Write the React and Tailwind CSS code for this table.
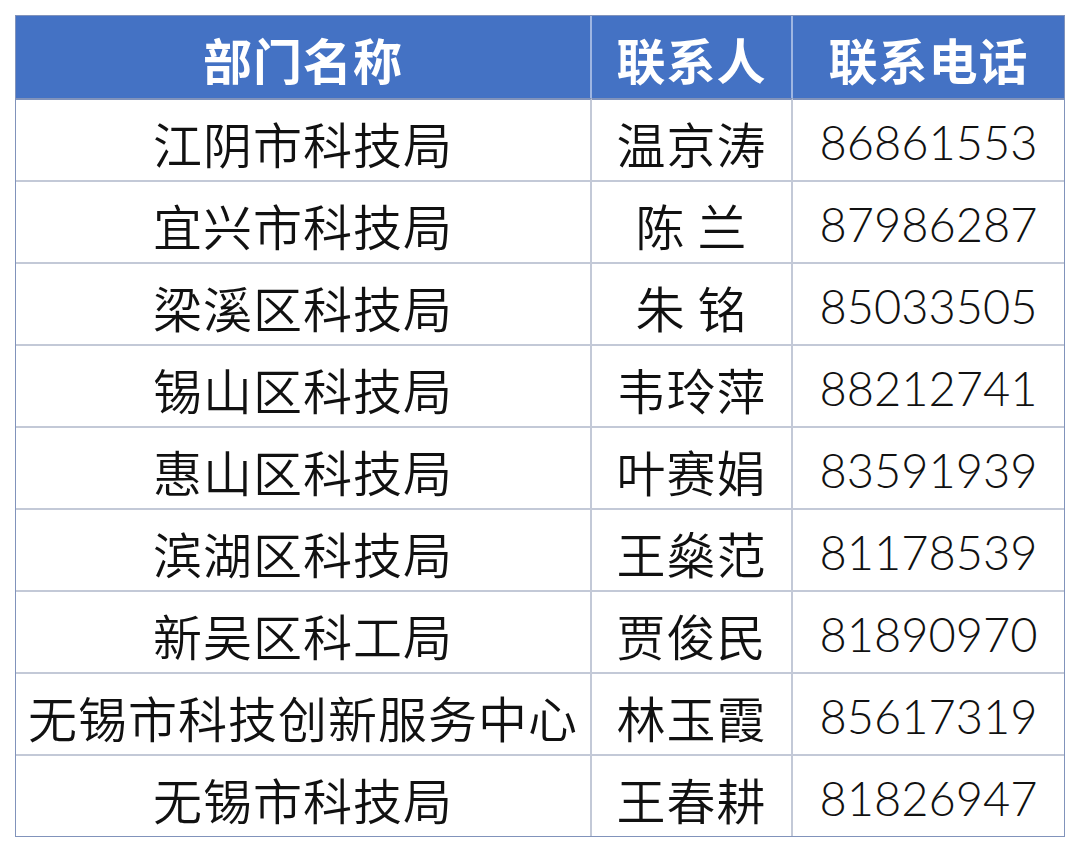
import React from "react";

const rows = [
  ["江阴市科技局", "温京涛", "86861553"],
  ["宜兴市科技局", "陈 兰", "87986287"],
  ["梁溪区科技局", "朱 铭", "85033505"],
  ["锡山区科技局", "韦玲萍", "88212741"],
  ["惠山区科技局", "叶赛娟", "83591939"],
  ["滨湖区科技局", "王燊范", "81178539"],
  ["新吴区科工局", "贾俊民", "81890970"],
  ["无锡市科技创新服务中心", "林玉霞", "85617319"],
  ["无锡市科技局", "王春耕", "81826947"],
];

const cjk = { fontFamily: '"Noto Sans CJK SC", "Noto Sans", sans-serif' };
const num = { fontFamily: 'Lato, "Liberation Sans", Arial, sans-serif' };

export default function App() {
  return (
    <div className="w-[1080px] h-[852px] bg-white pt-[15px] pl-[15px]">
      <div className="w-[1050px] border border-[#8193bb] grid grid-cols-[576px_201px_271px] grid-rows-[82px_repeat(9,82px)]">
        {["部门名称", "联系人", "联系电话"].map((h, i) => (
          <div
            key={h}
            style={cjk}
            className={`bg-[#4472c4] text-white font-bold text-[49px] leading-none flex items-center justify-center pt-[2px] tracking-[1px] ${
              i < 2 ? "border-r-2 border-[#9fb6e2]" : ""
            }`}
          >
            {h}
          </div>
        ))}
        {rows.map((r, ri) =>
          r.map((c, ci) => (
            <div
              key={ri + "-" + ci}
              style={ci === 2 ? num : cjk}
              className={`text-[#111] leading-none flex items-center justify-center whitespace-pre ${
                ci === 2 ? "text-[47px] font-light pt-[4px]" : "text-[49px] font-[350] pt-[5px] tracking-[1px]"
              } ${ci < 2 ? "border-r-2 border-r-[#c3c9d7]" : ""} border-t-2 ${
                ri === 0 ? "border-t-[#8193bb]" : "border-t-[#c3c9d7]"
              }`}
            >
              {c}
            </div>
          ))
        )}
      </div>
    </div>
  );
}
